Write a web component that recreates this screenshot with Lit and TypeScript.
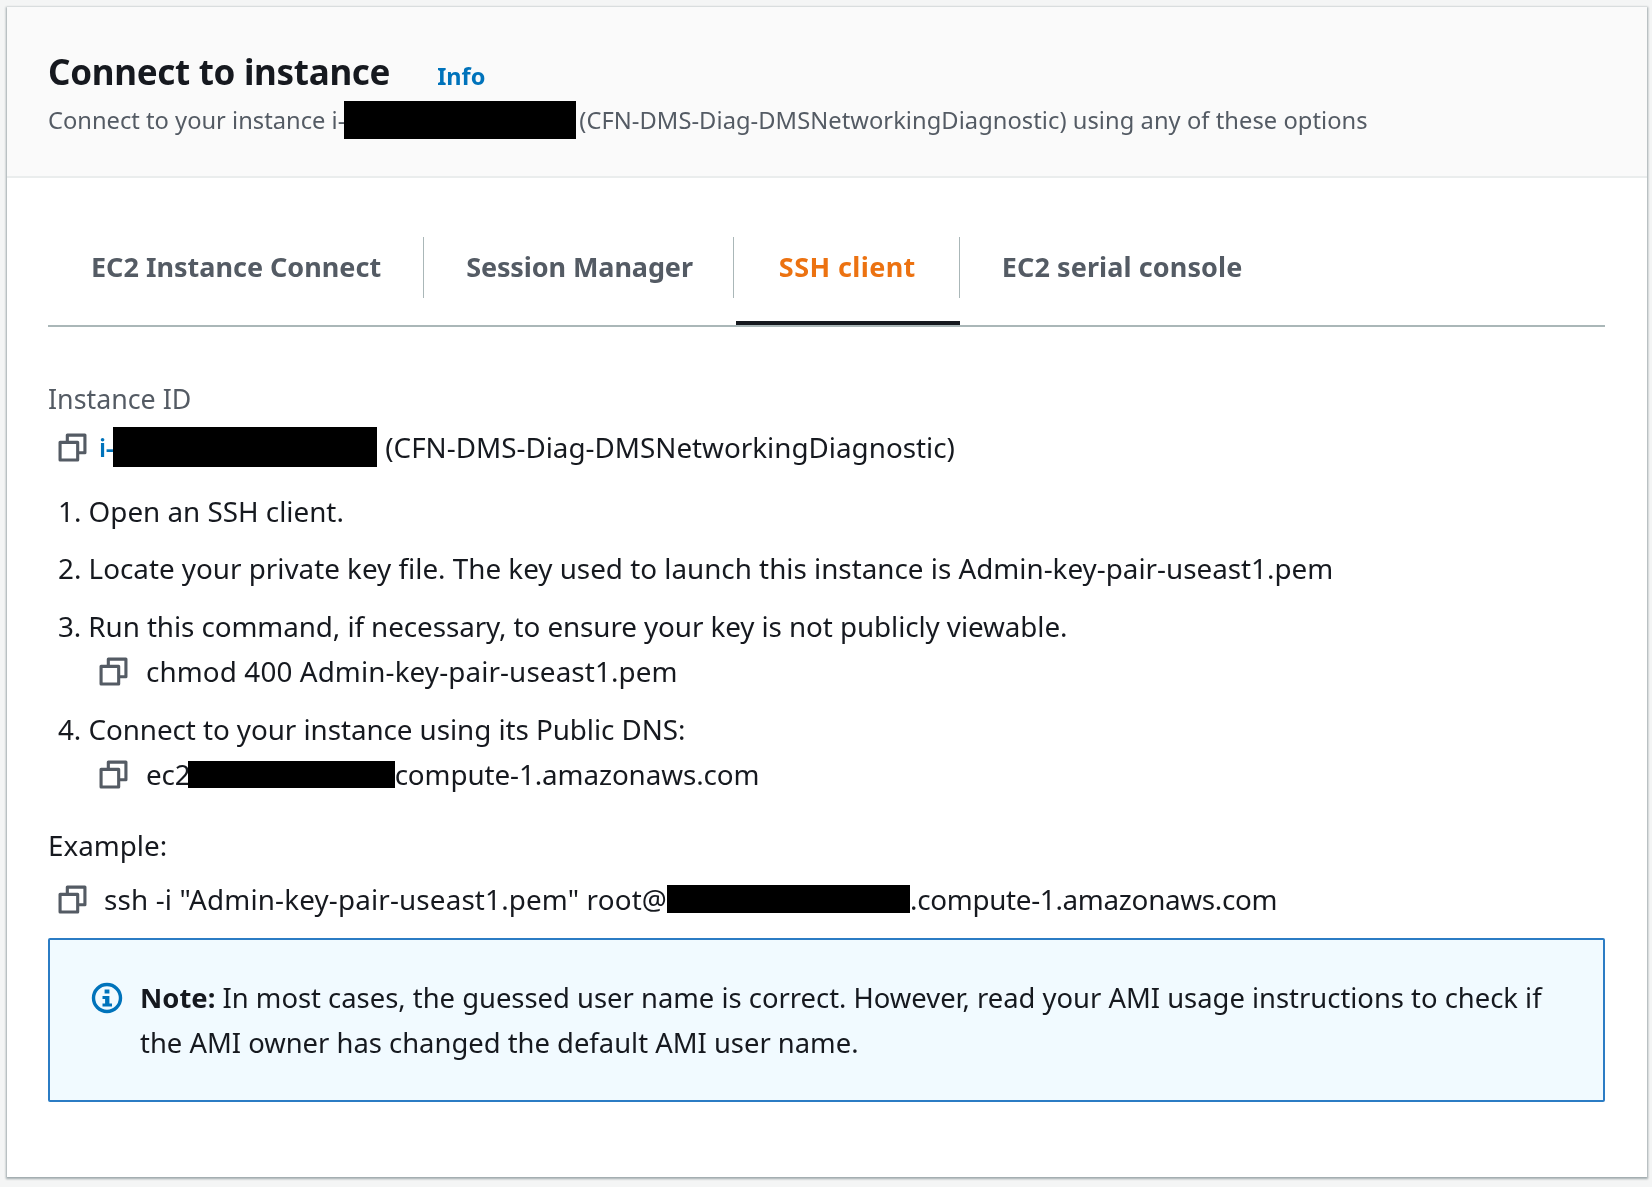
import { LitElement, html, css } from "lit";
import { customElement } from "lit/decorators.js";

const copyIcon = html`<svg class="copy" viewBox="0 0 28 28" fill="none" stroke="#545b64" stroke-width="3" stroke-linejoin="round"><path d="M2 9h17v17H2z"/><path d="M9 9V2h17v17h-7"/></svg>`;

@customElement("app-root")
export class AppRoot extends LitElement {
  static styles = css`
    :host { display: block; height: 1187px; box-sizing: border-box; padding: 7px 5px 10px 7px; background: #f4f5f5; font-family: "Noto Sans", sans-serif; color: #16191f; font-size: 27.8px; line-height: 44px; overflow: hidden; }
    .card { height: 1170px; background: #fff; box-shadow: 0 1px 2px 1px rgba(0,28,36,.35); display: flex; flex-direction: column; filter: blur(.35px); }
    .head { height: 171px; box-sizing: border-box; background: #fafafa; border-bottom: 2px solid #eaeded; padding: 43px 42px 0 41px; }
    .title-row { display: flex; align-items: baseline; }
    h1 { margin: 0; font-size: 35px; font-weight: 700; letter-spacing: -.3px; line-height: 44px; }
    .info { margin-left: 47px; font-size: 23.5px; font-weight: 700; color: #0073bb; }
    .sub { display: flex; align-items: center; color: #545b64; font-size: 23.7px; line-height: 38px; margin-top: 3px; white-space: nowrap; }
    .sub-tail { letter-spacing: .05px; }
    .redact { display: inline-block; background: #000; flex: none; }
    .r-sub { width: 232px; height: 38px; margin: 0 3px 0 -1px; }
    .r-id { width: 264px; height: 40px; margin-right: 8px; }
    .r-ec2 { width: 207px; height: 27px; margin-left: -3px; }
    .r-ssh { width: 243px; height: 28px; }
    .body { padding: 59px 42px 0 41px; flex: 1; }
    .tabs { display: flex; height: 88px; border-bottom: 2px solid #aab7b8; }
    .tab { position: relative; height: 88px; flex: none; }
    .tab span { display: flex; align-items: center; height: 61px; box-sizing: border-box; padding: 0 42px 2px; font-size: 27px; font-weight: 700; color: #545b64; border-right: 1px solid #aab7b8; }
    .tab:first-child span { padding-left: 43px; }
    .tab:last-child span { border-right: none; letter-spacing: .1px; padding-left: 42px; }
    .t2 span { letter-spacing: -.1px; padding-right: 40px; }
    .tab.active span { color: #ec7211; letter-spacing: .4px; padding-left: 45px; padding-right: 43px; }
    .tab.active::after { content: ""; position: absolute; left: 2px; right: 0; bottom: 0; height: 4px; background: #16191f; }
    .label { margin-top: 50px; color: #545b64; font-size: 26.8px; }
    .row { display: flex; align-items: center; height: 44px; white-space: nowrap; }
    .copy { width: 29px; height: 29px; flex: none; }
    .r0 { margin-top: 4px; padding-left: 10px; }
    .r0 .copy { margin-right: 12px; }
    .link { color: #0073bb; font-size: 25px; font-weight: 600; letter-spacing: -.4px; }
    .step { padding-left: 10px; }
    .cmd { padding-left: 51px; margin-top: 1px; }
    .cmd .copy { margin-right: 18px; }
    .s1 { margin-top: 20px; }
    .s2 { margin-top: 13px; }
    .s3 { margin-top: 14px; letter-spacing: -.08px; }
    .s4 { margin-top: 14px; letter-spacing: -.06px; }
    .chmod { letter-spacing: .12px; }
    .dns { letter-spacing: -.1px; }
    .example { margin-top: 27px; }
    .ssh { margin-top: 10px; padding-left: 10px; }
    .ssh .copy { margin-right: 17px; }
    .ssh-a { letter-spacing: .16px; }
    .ssh-b { letter-spacing: -.3px; }
    .note { margin-top: 17px; height: 164px; box-sizing: border-box; border: 2px solid #2b7cc4; border-radius: 2px; background: #f1faff; padding: 35px 40px 0 41px; display: flex; gap: 17px; line-height: 45px; font-size: 27.4px; }
    .note svg { width: 32px; height: 32px; flex: none; margin-top: 7px; }
    b { font-weight: 700; }
  `;

  render() {
    return html`<div class="card">
      <div class="head">
        <div class="title-row"><h1>Connect to instance</h1><span class="info">Info</span></div>
        <div class="sub">Connect to your instance i-<span class="redact r-sub"></span><span class="sub-tail">(CFN-DMS-Diag-DMSNetworkingDiagnostic) using any of these options</span></div>
      </div>
      <div class="body">
        <div class="tabs">
          <div class="tab"><span>EC2 Instance Connect</span></div>
          <div class="tab t2"><span>Session Manager</span></div>
          <div class="tab active"><span>SSH client</span></div>
          <div class="tab"><span>EC2 serial console</span></div>
        </div>
        <div class="label">Instance ID</div>
        <div class="row r0">${copyIcon}<span class="link">i-</span><span class="redact r-id"></span>(CFN-DMS-Diag-DMSNetworkingDiagnostic)</div>
        <div class="row step s1">1. Open an SSH client.</div>
        <div class="row step s2">2. Locate your private key file. The key used to launch this instance is Admin-key-pair-useast1.pem</div>
        <div class="row step s3">3. Run this command, if necessary, to ensure your key is not publicly viewable.</div>
        <div class="row cmd">${copyIcon}<span class="chmod">chmod 400 Admin-key-pair-useast1.pem</span></div>
        <div class="row step s4">4. Connect to your instance using its Public DNS:</div>
        <div class="row cmd">${copyIcon}<span class="dns">ec2</span><span class="redact r-ec2"></span><span class="dns">compute-1.amazonaws.com</span></div>
        <div class="example">Example:</div>
        <div class="row ssh">${copyIcon}<span class="ssh-a">ssh -i "Admin-key-pair-useast1.pem" root@</span><span class="redact r-ssh"></span><span class="ssh-b">.compute-1.amazonaws.com</span></div>
        <div class="note">
          <svg viewBox="0 0 32 32"><circle cx="16" cy="16" r="13.5" fill="none" stroke="#0073bb" stroke-width="3.4"/><rect x="13.6" y="7.5" width="4.8" height="4" fill="#0073bb"/><path d="M11.5 14h6.9v7.5h2.6v3H11.5v-3h2.6V17h-2.6z" fill="#0073bb"/></svg>
          <div><b>Note:</b> In most cases, the guessed user name is correct. However, read your AMI usage instructions to check if<br>the AMI owner has changed the default AMI user name.</div>
        </div>
      </div>
    </div>`;
  }
}
